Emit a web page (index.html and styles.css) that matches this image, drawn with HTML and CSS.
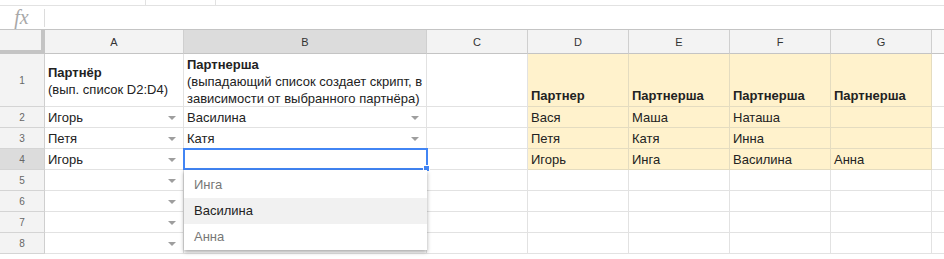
FILE: index.html
```html
<!DOCTYPE html>
<html lang="ru">
<head>
<meta charset="utf-8">
<link rel="stylesheet" href="styles.css">
</head>
<body>
<div class="app">
  <div class="topstrip"><span class="ts ts1"></span><span class="ts ts2"></span></div>
  <div class="fbar"><span class="fx">fx</span><span class="fsep"></span></div>
  <div class="sheet">
    <div class="grid">
      <div class="corner"></div>
      <div class="ch">A</div>
      <div class="ch sel">B</div>
      <div class="ch">C</div>
      <div class="ch">D</div>
      <div class="ch">E</div>
      <div class="ch">F</div>
      <div class="ch">G</div>
      <div class="ch rest"></div>

      <div class="rh">1</div>
      <div class="c wrap"><div><b>Партнёр</b><br>(вып. список D2:D4)</div></div>
      <div class="c wrap"><div><b>Партнерша</b><br>(выпадающий список создает скрипт, в зависимости от выбранного партнёра)</div></div>
      <div class="c"></div>
      <div class="c y bot"><b>Партнер</b></div>
      <div class="c y bot"><b>Партнерша</b></div>
      <div class="c y bot"><b>Партнерша</b></div>
      <div class="c y bot"><b>Партнерша</b></div>
      <div class="c rest"></div>

      <div class="rh">2</div>
      <div class="c dd">Игорь<i class="arr"></i></div>
      <div class="c dd">Василина<i class="arr"></i></div>
      <div class="c"></div>
      <div class="c y">Вася</div>
      <div class="c y">Маша</div>
      <div class="c y">Наташа</div>
      <div class="c y"></div>
      <div class="c rest"></div>

      <div class="rh">3</div>
      <div class="c dd">Петя<i class="arr"></i></div>
      <div class="c dd">Катя<i class="arr"></i></div>
      <div class="c"></div>
      <div class="c y">Петя</div>
      <div class="c y">Катя</div>
      <div class="c y">Инна</div>
      <div class="c y"></div>
      <div class="c rest"></div>

      <div class="rh sel">4</div>
      <div class="c dd">Игорь<i class="arr"></i></div>
      <div class="c active"><span class="handle"></span></div>
      <div class="c"></div>
      <div class="c y">Игорь</div>
      <div class="c y">Инга</div>
      <div class="c y">Василина</div>
      <div class="c y">Анна</div>
      <div class="c rest"></div>

      <div class="rh">5</div>
      <div class="c dd"><i class="arr"></i></div>
      <div class="c"></div><div class="c"></div><div class="c"></div><div class="c"></div><div class="c"></div><div class="c"></div><div class="c rest"></div>

      <div class="rh">6</div>
      <div class="c dd"><i class="arr"></i></div>
      <div class="c"></div><div class="c"></div><div class="c"></div><div class="c"></div><div class="c"></div><div class="c"></div><div class="c rest"></div>

      <div class="rh">7</div>
      <div class="c dd"><i class="arr"></i></div>
      <div class="c"></div><div class="c"></div><div class="c"></div><div class="c"></div><div class="c"></div><div class="c"></div><div class="c rest"></div>

      <div class="rh">8</div>
      <div class="c dd"><i class="arr"></i></div>
      <div class="c"></div><div class="c"></div><div class="c"></div><div class="c"></div><div class="c"></div><div class="c"></div><div class="c rest"></div>
    </div>
    <div class="menu">
      <div class="item dim">Инга</div>
      <div class="item hi">Василина</div>
      <div class="item dim">Анна</div>
    </div>
  </div>
</div>
</body>
</html>
```

FILE: styles.css
```css
html, body {
  margin: 0;
  padding: 0;
  background: #fff;
}
body {
  font-family: "Liberation Sans", Arial, sans-serif;
  width: 944px;
  height: 259px;
  overflow: hidden;
}
.app {
  width: 944px;
}
.topstrip {
  height: 5px;
  border-bottom: 1px solid #e2e2e2;
  position: relative;
}
.ts {
  position: absolute;
  top: 0;
  width: 1px;
  height: 5px;
  background: #e2e2e2;
}
.ts1 { left: 145px; }
.ts2 { left: 215px; }
.fbar {
  height: 23px;
  border-bottom: 1px solid #c4c4c4;
  display: flex;
  align-items: center;
}
.fx {
  width: 43px;
  text-align: center;
  font-family: "Liberation Serif", "Times New Roman", serif;
  font-style: italic;
  font-size: 20px;
  color: #a8a8a8;
  line-height: 23px;
  padding-right: 1px;
}
.fsep {
  width: 1px;
  height: 18px;
  background: #dcdcdc;
}
.sheet {
  position: relative;
}
.grid {
  display: grid;
  grid-template-columns: 45px 139px 243px 101px 101px 101px 101px 101px 1fr;
  grid-template-rows: 24px 53px repeat(8, 21px);
}
.grid > div {
  box-sizing: border-box;
  border-right: 1px solid #e2e2e2;
  border-bottom: 1px solid #e2e2e2;
  font-size: 13px;
  color: #222;
  position: relative;
}
.grid > .corner {
  background: #f3f3f3;
  border-right: 4px solid #c4c4c4;
  border-bottom: 4px solid #c4c4c4;
}
.grid > .ch {
  background: #f3f3f3;
  border-right: 1px solid #cfcfcf;
  border-bottom: 1px solid #c4c4c4;
  font-size: 11px;
  color: #333;
  display: flex;
  align-items: center;
  justify-content: center;
}
.grid > .ch.sel,
.grid > .rh.sel {
  background: #dcdcdc;
}
.grid > .ch.rest {
  background: #f8f8f8;
  border-right: none;
}
.grid > .rh {
  background: #f3f3f3;
  border-right: 1px solid #cfcfcf;
  border-bottom: 1px solid #d4d4d4;
  font-size: 10px;
  color: #666;
  display: flex;
  align-items: center;
  justify-content: center;
  padding-top: 1px;
}
.c {
  padding: 2px 3px 0;
  display: flex;
  align-items: center;
  white-space: nowrap;
  line-height: 16px;
}
.c.wrap {
  white-space: normal;
  line-height: 17px;
  padding-top: 2px;
}
.c.bot {
  align-items: flex-end;
  padding-bottom: 2px;
}
.grid > .c.y {
  background: #fff2cc;
  border-color: #e4dcc0;
}
.grid > .c.rest {
  border-right: none;
  background: #fff;
}
.c b {
  font-weight: bold;
}
.arr {
  position: absolute;
  right: 7px;
  top: 9px;
  width: 0;
  height: 0;
  border-left: 4px solid transparent;
  border-right: 4px solid transparent;
  border-top: 4px solid #9e9e9e;
}
.grid > .c.active {
  border: 2px solid #4285f4;
  margin: -1px 0 0 -1px;
  width: calc(100% + 2px);
  height: 22px;
  background: #fff;
  z-index: 2;
}
.handle {
  position: absolute;
  right: -4px;
  bottom: -4px;
  width: 5px;
  height: 5px;
  background: #4285f4;
  border: 1px solid #fff;
}
.menu {
  position: absolute;
  left: 184px;
  top: 140px;
  width: 243px;
  background: #fff;
  box-shadow: 0 2px 4px rgba(0, 0, 0, 0.35);
  padding: 2px 0 0;
  z-index: 3;
}
.item {
  height: 26px;
  line-height: 26px;
  padding-left: 10px;
  font-size: 13px;
}
.item.dim {
  color: #777;
}
.item.hi {
  color: #222;
  background: #f1f1f1;
}
```
